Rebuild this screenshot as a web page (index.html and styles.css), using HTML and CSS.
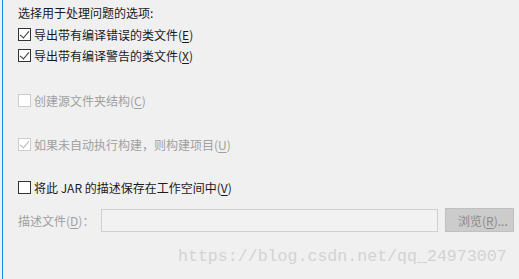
FILE: index.html
```html
<!DOCTYPE html>
<html>
	<head>
		<title>JAR Export</title>
		<meta charset="utf-8">
		<link rel="stylesheet" href="styles.css">
	</head>
	<body>
		<div class="page">
			<div class="edge"></div>
			<div class="options">
				<div class="heading">选择用于处理问题的选项:</div>
				<label class="row row-1"><span class="box checked"></span>导出带有编译错误的类文件(<u>E</u>)</label>
				<label class="row row-2"><span class="box checked"></span>导出带有编译警告的类文件(<u>X</u>)</label>

				<label class="row row-3 disabled"><span class="box"></span>创建源文件夹结构(<u>C</u>)</label>
				<label class="row row-4 disabled"><span class="box checked"></span>如果未自动执行构建，则构建项目(<u>U</u>)</label>

				<label class="row row-5"><span class="box"></span>将此 JAR 的描述保存在工作空间中(<u>V</u>)</label>

				<div class="file-row">
					<span class="file-label">描述文件(<u>D</u>)：</span>
					<div class="file-input"></div>
					<button class="browse">浏览(<u>R</u>)...</button>
				</div>
			</div>
			<div class="watermark">https://blog.csdn.net/qq_24973007</div>
		</div>
	</body>
</html>
```

FILE: styles.css
```css
html, body {
    margin: 0;
    padding: 0;
    height: 100%;
}

body {
    background: #f0f0f0;
    font-family: "Noto Sans CJK SC", "Noto Sans", sans-serif;
    font-size: 12px;
    color: #1a1a1a;
}

.page {
    position: relative;
    height: 279px;
    display: flex;
    overflow: hidden;
}

.edge {
    width: 1px;
    margin-left: 2px;
    background: #1787e8;
    flex: none;
}

.options {
    display: flex;
    flex-direction: column;
    padding-left: 14px;
    flex: 1;
}

.heading {
    margin-top: 3px;
    height: 20px;
    line-height: 20px;
    padding-left: 1px;
}

.row {
    display: flex;
    align-items: center;
    height: 21px;
    line-height: 21px;
}

.row-1 { margin-top: 1px; }
.row-2 { margin-top: 0; }
.row-3 { margin-top: 24px; }
.row-4 { margin-top: 23px; }
.row-5 { margin-top: 22px; }

.box {
    width: 11px;
    height: 11px;
    border: 1px solid #333333;
    background: #ffffff;
    margin-left: 1px;
    margin-right: 3px;
    position: relative;
    flex: none;
}

.box.checked::after {
    content: "";
    position: absolute;
    left: 3px;
    top: 0;
    width: 4px;
    height: 8px;
    border-right: 1.2px solid #333333;
    border-bottom: 1.2px solid #333333;
    transform: rotate(40deg);
}

.disabled {
    color: #a0a0a0;
}

.disabled .box {
    border-color: #cccccc;
}

.disabled .box.checked::after {
    border-color: #b5b5b5;
}

u {
    text-decoration-thickness: 1px;
    text-underline-offset: 2px;
}

.file-row {
    display: flex;
    align-items: center;
    margin-top: 10px;
    height: 24px;
}

.file-label {
    color: #a0a0a0;
    width: 83px;
    padding-left: 1px;
    flex: none;
}

.file-input {
    width: 335px;
    height: 21px;
    border: 1px solid #cfcfcf;
    background: #f2f2f2;
    flex: none;
}

.browse {
    margin-left: 7px;
    width: 69px;
    height: 24px;
    border: 1px solid #c0c0c0;
    background: #cccccc;
    color: #8a8a8a;
    font-family: inherit;
    font-size: 12px;
    padding: 0 0 0 12px;
    text-align: left;
    flex: none;
}

.watermark {
    position: absolute;
    left: 178px;
    top: 247px;
    font-family: "Liberation Mono", monospace;
    font-size: 16.6px;
    color: #d3d3d3;
}
```
